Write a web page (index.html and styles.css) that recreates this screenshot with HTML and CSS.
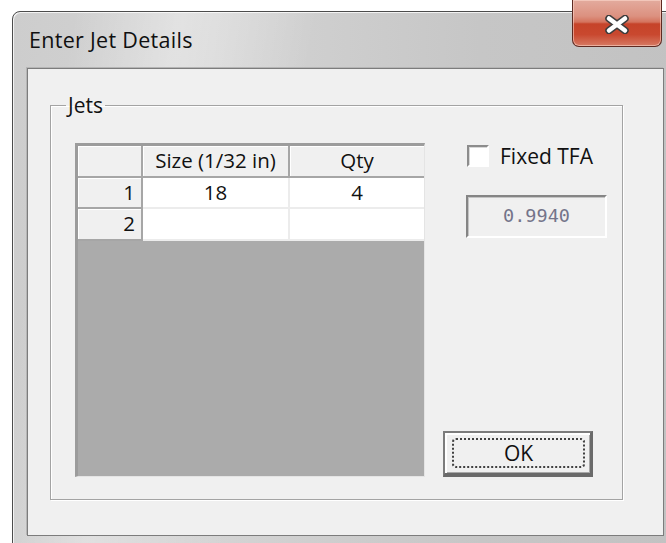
FILE: index.html
```html
<!DOCTYPE html>
<html>
<head>
<meta charset="utf-8">
<title>Enter Jet Details</title>
<link rel="stylesheet" href="styles.css">
</head>
<body>
<div class="window">
  <div class="titlebar">
    <span class="title">Enter Jet Details</span>
    <button class="close" aria-label="Close">
      <svg width="26" height="19" viewBox="0 0 26 19">
        <g stroke-linecap="round">
          <path d="M5 3.5 L21 15.5 M21 3.5 L5 15.5" stroke="#3d3d3d" stroke-width="7.5"/>
          <path d="M5 3.5 L21 15.5 M21 3.5 L5 15.5" stroke="#ffffff" stroke-width="4.5"/>
        </g>
      </svg>
    </button>
  </div>
  <div class="client">
    <fieldset class="group">
      <legend>Jets</legend>
      <div class="group-body">
        <div class="grid">
          <div class="cell hdr corner"></div>
          <div class="cell hdr col">Size (1/32 in)</div>
          <div class="cell hdr col last">Qty</div>
          <div class="cell hdr rowhdr">1</div>
          <div class="cell data">18</div>
          <div class="cell data last">4</div>
          <div class="cell hdr rowhdr">2</div>
          <div class="cell data"></div>
          <div class="cell data last"></div>
        </div>
        <div class="side">
          <label class="check">
            <span class="box"></span>
            <span>Fixed TFA</span>
          </label>
          <div class="tfa">0.9940</div>
          <button class="ok"><span class="focus">OK</span></button>
        </div>
      </div>
    </fieldset>
  </div>
</div>
</body>
</html>
```
FILE: styles.css
```css
html, body {
  margin: 0;
  padding: 0;
}

body {
  width: 666px;
  height: 543px;
  overflow: hidden;
  background: #ffffff;
  font-family: "Open Sans", "Noto Sans", sans-serif;
  font-weight: 500;
  color: #111111;
}

/* window frame */
.window {
  margin: 11px 0 0 12px;
  width: 670px;
  height: 545px;
  box-sizing: border-box;
  border: 1px solid #4c4c4c;
  border-radius: 8px 8px 0 0;
  background:
    linear-gradient(100deg, rgba(255,255,255,0) 8%, rgba(255,255,255,0.35) 22%, rgba(255,255,255,0) 40%),
    linear-gradient(to right, #cdcdcd, #d4d4d4 30%, #c6c6c6 70%, #c2c2c2);
  box-shadow: inset 1px 1px 0 rgba(255,255,255,0.75);
  display: flex;
  flex-direction: column;
}

.titlebar {
  height: 56px;
  flex: none;
  display: flex;
  align-items: center;
  padding-left: 16px;
  padding-bottom: 2px;
  box-sizing: border-box;
}

.title {
  font-size: 21.5px;
  color: #101010;
  letter-spacing: 0.3px;
}

/* caption close button hangs from the top edge */
.close {
  position: absolute;
  left: 572px;
  top: 0;
  width: 90px;
  height: 47px;
  padding: 0;
  margin: 0;
  border: 1px solid #5e2a22;
  border-top: none;
  border-radius: 0 0 7px 7px;
  background: linear-gradient(to bottom, #e3ab9e 0%, #dc9180 35%, #d4735d 48%, #c64329 52%, #c9482f 75%, #d67a63 100%);
  box-shadow: inset 0 0 0 1px rgba(255,220,210,0.55);
  display: flex;
  align-items: center;
  justify-content: center;
}

.close svg {
  display: block;
  margin-top: 2px;
}

/* dialog client area */
.client {
  margin-left: 14px;
  width: 637px;
  height: 468px;
  box-sizing: border-box;
  border: 1px solid #7c7c7c;
  background: #f0f0f0;
  box-shadow: -1px -1px 0 #b5b5b5;
  padding: 22px 0 0 22px;
}

.group {
  margin: 0;
  width: 573px;
  height: 409px;
  box-sizing: border-box;
  border: 1px solid #a3a3a3;
  box-shadow: inset 1px 1px 0 #ffffff, 1px 1px 0 #ffffff;
  padding: 0 0 0 24px;
  min-width: 0;
}

.group legend {
  font-size: 21px;
  line-height: 28px;
  padding: 0 2px;
  margin-left: -9px;
  color: #111111;
}

.group-body {
  display: flex;
  padding-top: 24px;
}

/* data grid */
.grid {
  width: 350px;
  height: 334px;
  box-sizing: border-box;
  border-top: 3px solid #9c9c9c;
  border-left: 3px solid #9c9c9c;
  border-right: 1px solid #e4e4e4;
  border-bottom: 1px solid #e4e4e4;
  background: #ababab;
  display: grid;
  grid-template-columns: 65px 147px 134px;
  grid-template-rows: 32px 31px 32px;
  align-content: start;
  font-size: 20.5px;
}

.cell {
  box-sizing: border-box;
  display: flex;
  align-items: center;
  line-height: 1;
  padding-bottom: 1px;
}

.hdr {
  background: #f0f0f0;
  border-right: 2px solid #a6a6a6;
  border-bottom: 2px solid #a6a6a6;
  box-shadow: inset 1px 1px 0 #ffffff;
}

.col {
  justify-content: center;
}

.rowhdr {
  justify-content: flex-end;
  padding-right: 6px;
}

.data {
  background: #ffffff;
  border-right: 2px solid #ececec;
  border-bottom: 2px solid #ececec;
  justify-content: center;
}

.last {
  border-right: none;
}

/* right-hand controls */
.side {
  margin-left: 18px;
  width: 166px;
  height: 334px;
  display: flex;
  flex-direction: column;
  align-items: flex-start;
}

.check {
  margin: 2px 0 0 24px;
  display: flex;
  align-items: center;
  gap: 11px;
  font-size: 21px;
  height: 22px;
}

.box {
  flex: none;
  width: 22px;
  height: 22px;
  box-sizing: border-box;
  background: #ffffff;
  border: 2px solid #ffffff;
  border-top-color: #8c8c8c;
  border-left-color: #8c8c8c;
  box-shadow: inset 1px 1px 0 #d8d8d8;
}

.tfa {
  margin: 28px 0 0 23px;
  width: 141px;
  height: 43px;
  box-sizing: border-box;
  border: 2px solid #ffffff;
  border-top-color: #858585;
  border-left-color: #858585;
  box-shadow: inset 1px 1px 0 #c4c4c4;
  background: #f0f0f0;
  display: flex;
  align-items: center;
  justify-content: center;
  font-family: "DejaVu Sans Mono", "Liberation Mono", monospace;
  font-weight: 400;
  font-size: 18.5px;
  color: #74748a;
  padding-bottom: 2px;
}

.ok {
  margin-top: auto;
  width: 150px;
  height: 46px;
  box-sizing: border-box;
  padding: 5px 5px 5px 7px;
  border: 2px solid #6a6a6a;
  border-right-width: 3px;
  border-bottom-width: 4px;
  border-top-color: #7c7c7c;
  border-left-color: #7c7c7c;
  background: #f0f0f0;
  box-shadow: inset 2px 2px 0 #ffffff, inset -1px -1px 0 #a8a8a8;
  font-family: "Open Sans", "Noto Sans", sans-serif;
  font-weight: 500;
  font-size: 21px;
  color: #101010;
  display: flex;
}

.ok .focus {
  flex: 1;
  border: 2px dotted #404040;
  border-radius: 4px;
  display: flex;
  align-items: center;
  justify-content: center;
  line-height: 1;
}
```
